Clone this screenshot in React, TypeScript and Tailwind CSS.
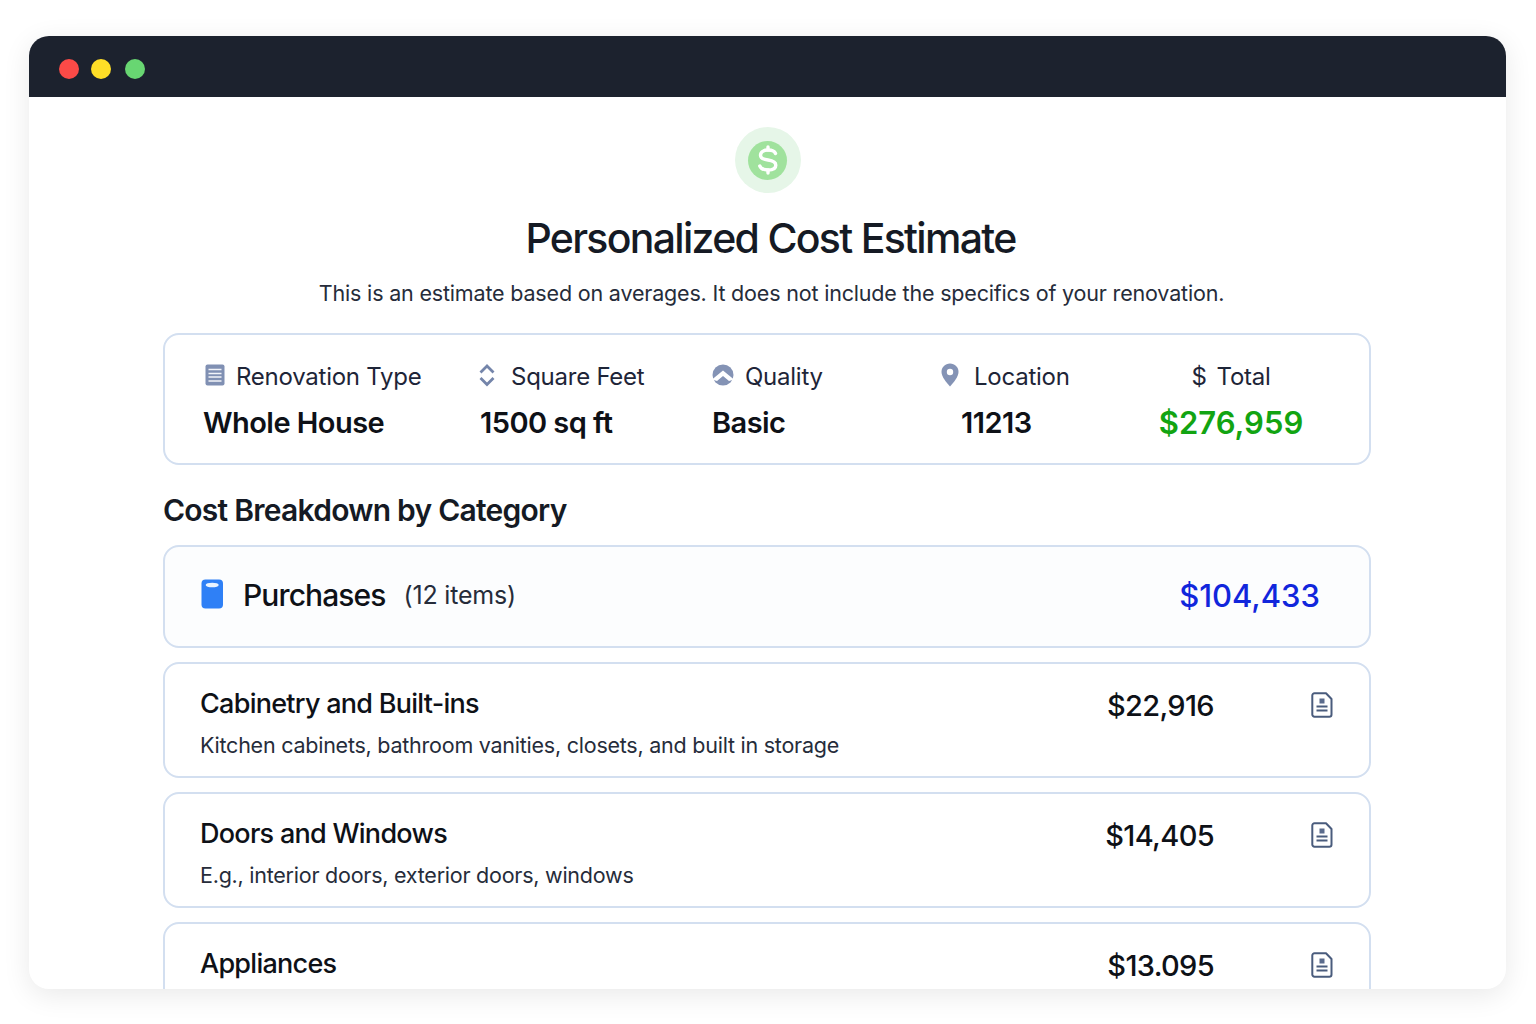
import type { ReactNode } from "react";

const font = { fontFamily: "Inter, 'Liberation Sans', sans-serif" };

function DocIcon() {
  return (
    <svg width="22" height="26" viewBox="0 0 22 26" fill="none">
      <path d="M3.500 1.200h11.500l5.500 5.800v15.500a2.200 2.200 0 0 1-2.200 2.200H3.500a2.200 2.200 0 0 1-2.200-2.200V3.400a2.200 2.200 0 0 1 2.200-2.200z" stroke="#4a5c7d" strokeWidth="2" strokeLinejoin="round" />
      <rect x="8.500" y="6.500" width="5" height="5" fill="#5a6b8c" />
      <path d="M5.500 14.500h11M5.500 18.500h11" stroke="#4a5c7d" strokeWidth="1.800" />
    </svg>
  );
}

function RenovationIcon() {
  return (
    <svg className="ml-[2px]" width="20" height="22" viewBox="0 0 20 22">
      <rect x="0.500" y="0.500" width="19" height="21" rx="2" fill="#8090b3" />
      <path d="M3.500 5.500h13M3.500 9.500h13M3.500 13h13M3.500 17h13" stroke="#f2f4f9" strokeWidth="1.500" />
    </svg>
  );
}

function SquareIcon() {
  return (
    <svg width="18" height="24" viewBox="0 0 18 24" fill="none" stroke="#7485aa" strokeWidth="2.800">
      <path d="M2.500 9.500L9 3l6.500 6.500" />
      <path d="M2.500 15L9 21.500 15.500 15" />
    </svg>
  );
}

function QualityIcon() {
  return (
    <svg width="22" height="22" viewBox="0 0 22 22">
      <circle cx="11" cy="11" r="10.500" fill="#8493b5" />
      <path d="M0 15.500L11 6.500l11 9-5 1.500-6-5-6 5z" fill="#fff" />
      <path d="M5.500 17.500l5.500-4.500 5.500 4.500-3 3.500h-5z" fill="#8493b5" />
    </svg>
  );
}

function PinIcon() {
  return (
    <svg width="18" height="24" viewBox="0 0 18 24">
      <path d="M9 0.500c4.800 0 8.500 3.700 8.500 8.300 0 5-4.500 10.200-8.500 14.700C5 19 0.500 13.800 0.500 8.800 0.500 4.200 4.200 0.500 9 0.500z" fill="#8493b5" />
      <circle cx="9" cy="9" r="3.200" fill="#fff" />
    </svg>
  );
}

function SummaryCell({ icon, label, value, className = "", valueClass = "" }: { icon: ReactNode; label: string; value: string; className?: string; valueClass?: string }) {
  return (
    <div className={className}>
      <div className="flex h-[28px] items-center">
        <span className="-mt-[4px] flex w-[33px] shrink-0">{icon}</span>
        <span className="text-[24px] leading-none tracking-[-0.25px] text-[#1e2538]">{label}</span>
      </div>
      <div className={`mt-[14px] text-[29px] leading-[36px] font-semibold tracking-[-0.55px] text-[#0e1117] ${valueClass}`}>{value}</div>
    </div>
  );
}

function CostRow({ title, desc, price }: { title: string; desc?: string; price: string }) {
  return (
    <div className="mb-[14px] flex h-[116px] shrink-0 rounded-[16px] border-2 border-[#d3dff0] bg-white pr-[36px] pl-[35px]">
      <div className="flex-1 pt-[22px]">
        <div className="text-[27px] leading-[36px] font-medium tracking-[-0.73px] text-[#0e1117]">{title}</div>
        {desc && <div className="mt-[7px] text-[21.5px] leading-[32px] tracking-[-0.24px] text-[#262c3a]">{desc}</div>}
      </div>
      <div className="mr-[97px] pt-[23px] text-[29px] leading-[38px] font-medium tracking-[-0.65px] text-[#0e1117]">{price}</div>
      <div className="pt-[28px]">
        <DocIcon />
      </div>
    </div>
  );
}

export default function App() {
  return (
    <div className="h-[1024px] overflow-hidden bg-white pt-[36px] pl-[29px]" style={font}>
      <div className="h-[953px] w-[1477px] overflow-hidden rounded-[20px] bg-white shadow-[0_6px_28px_rgba(0,0,0,0.09)]">
        <div className="flex h-[61px] items-center gap-[12px] bg-[#1c222e] pt-[4px] pl-[30px]">
          <span className="size-[20px] rounded-full bg-[#fb4a47]" />
          <span className="size-[20px] rounded-full bg-[#ffde27]" />
          <span className="ml-[2px] size-[20px] rounded-full bg-[#68d672]" />
        </div>

        <div className="flex flex-col items-center pt-[30px]">
          <div className="flex size-[66px] items-center justify-center rounded-full bg-[#e6f6e8]">
            <div className="flex size-[39px] items-center justify-center rounded-full bg-[#a0e29d]">
              <svg width="22" height="30" viewBox="0 0 22 30" fill="none" stroke="#fff" strokeWidth="3.400" strokeLinecap="round">
                <path d="M18.500 8.500C17.500 6 14.500 5 11 5 7 5 3.500 6.800 3.500 10.200c0 3.300 3.300 4.200 7.500 4.800 4.200.6 7.800 1.700 7.800 5.200 0 3.300-3.600 4.800-7.800 4.800-4 0-7-1.200-8.200-4" />
                <path d="M11 2v3M11 25v3" />
              </svg>
            </div>
          </div>
          <h1 className="mt-[18px] ml-[6px] text-[41px] leading-[54px] font-medium tracking-[-1.7px] text-[#151a24]">Personalized Cost Estimate</h1>
          <p className="mt-[12px] ml-[8px] text-[21.5px] leading-[32px] tracking-[-0.18px] text-[#262c3a]">This is an estimate based on averages. It does not include the specifics of your renovation.</p>
        </div>

        <div className="ml-[134px] w-[1208px]">
          <div className="mt-[24px] flex h-[132px] rounded-[16px] border-2 border-[#d3dff0] bg-white pt-[28px] pl-[38px]">
            <SummaryCell className="w-[275px]" icon={<RenovationIcon />} label="Renovation Type" value="Whole House" />
            <SummaryCell className="w-[234px]" icon={<SquareIcon />} label="Square Feet" value="1500 sq ft" valueClass="ml-[2px]" />
            <SummaryCell className="w-[229px]" icon={<QualityIcon />} label="Quality" value="Basic" />
            <SummaryCell className="w-[218px]" icon={<PinIcon />} label="Location" value="11213" valueClass="ml-[20px]" />
            <div className="flex w-[144px] flex-col items-center">
              <div className="flex h-[28px] items-center gap-[10px] text-[24px] leading-none tracking-[-0.25px] text-[#1e2538]">
                <span>$</span>
                <span>Total</span>
              </div>
              <div className="mt-[14px] text-[31px] leading-[36px] font-semibold whitespace-nowrap text-[#12a412]">$276,959</div>
            </div>
          </div>

          <h2 className="mt-[25px] text-[30px] leading-[40px] font-semibold tracking-[-0.75px] text-[#151a24]">Cost Breakdown by Category</h2>

          <div className="mt-[15px] mb-[14px] flex h-[103px] items-center rounded-[16px] border-2 border-[#d3dff0] bg-[#fcfdfe] pr-[49px] pb-[3px] pl-[35px]">
            <svg className="mt-[2px] mb-[5px]" width="24" height="30" viewBox="0 0 24 30">
              <rect x="1.500" y="0.500" width="21.500" height="29" rx="4" fill="#2f80f6" />
              <ellipse cx="12.200" cy="6" rx="6.500" ry="2.300" fill="#eaf3ff" />
            </svg>
            <span className="ml-[19px] text-[30px] leading-none font-medium tracking-[-0.9px] text-[#0e1117]">Purchases</span>
            <span className="ml-[18px] text-[25px] leading-none tracking-[-0.2px] text-[#262c3a]">(12 items)</span>
            <span className="ml-auto text-[31px] leading-none font-medium text-[#1126dc]">$104,433</span>
          </div>

          <CostRow title="Cabinetry and Built-ins" desc="Kitchen cabinets, bathroom vanities, closets, and built in storage" price="$22,916" />
          <CostRow title="Doors and Windows" desc="E.g., interior doors, exterior doors, windows" price="$14,405" />
          <CostRow title="Appliances" price="$13.095" />
        </div>
      </div>
    </div>
  );
}
